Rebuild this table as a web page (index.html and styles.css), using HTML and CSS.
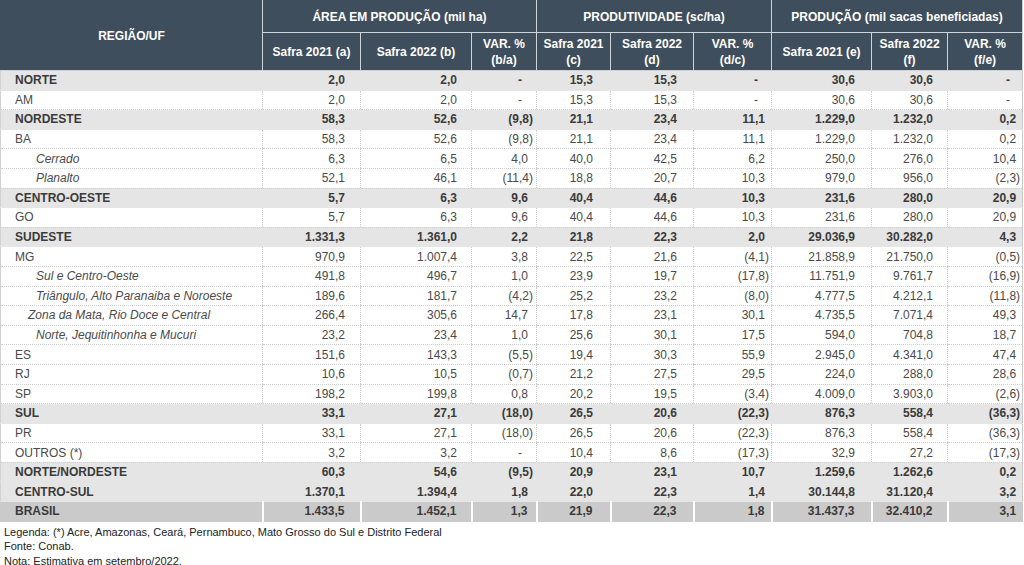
FILE: index.html
```html
<!DOCTYPE html>
<html lang="pt-BR">
<head>
<meta charset="utf-8">
<title>Café - Safra 2022</title>
<link rel="stylesheet" href="styles.css">
</head>
<body>
<table class="tbl">
  <colgroup>
    <col class="c0"><col class="ca"><col class="cb"><col class="cv1">
    <col class="cc"><col class="cd"><col class="cv2">
    <col class="ce"><col class="cf"><col class="cv3">
  </colgroup>
  <thead>
    <tr class="h1">
      <th rowspan="2">REGIÃO/UF</th>
      <th colspan="3">ÁREA EM PRODUÇÃO (mil ha)</th>
      <th colspan="3">PRODUTIVIDADE (sc/ha)</th>
      <th colspan="3">PRODUÇÃO (mil sacas beneficiadas)</th>
    </tr>
    <tr class="h2">
      <th>Safra 2021 (a)</th>
      <th>Safra 2022 (b)</th>
      <th>VAR. %<br>(b/a)</th>
      <th>Safra 2021<br>(c)</th>
      <th>Safra 2022<br>(d)</th>
      <th>VAR. %<br>(d/c)</th>
      <th>Safra 2021 (e)</th>
      <th>Safra 2022<br>(f)</th>
      <th>VAR. %<br>(f/e)</th>
    </tr>
  </thead>
  <tbody>
    <tr class="reg"><td class="nm">NORTE</td><td class="na">2,0</td><td class="nb">2,0</td><td class="v1 d">-</td><td class="nc">15,3</td><td class="nd">15,3</td><td class="v2 d">-</td><td class="ne">30,6</td><td class="nf">30,6</td><td class="v3 d">-</td></tr>
    <tr><td class="nm">AM</td><td class="na">2,0</td><td class="nb">2,0</td><td class="v1 d">-</td><td class="nc">15,3</td><td class="nd">15,3</td><td class="v2 d">-</td><td class="ne">30,6</td><td class="nf">30,6</td><td class="v3 d">-</td></tr>
    <tr class="reg"><td class="nm">NORDESTE</td><td class="na">58,3</td><td class="nb">52,6</td><td class="v1 ng">(9,8)</td><td class="nc">21,1</td><td class="nd">23,4</td><td class="v2">11,1</td><td class="ne">1.229,0</td><td class="nf">1.232,0</td><td class="v3">0,2</td></tr>
    <tr><td class="nm">BA</td><td class="na">58,3</td><td class="nb">52,6</td><td class="v1 ng">(9,8)</td><td class="nc">21,1</td><td class="nd">23,4</td><td class="v2">11,1</td><td class="ne">1.229,0</td><td class="nf">1.232,0</td><td class="v3">0,2</td></tr>
    <tr><td class="nm sub">Cerrado</td><td class="na">6,3</td><td class="nb">6,5</td><td class="v1">4,0</td><td class="nc">40,0</td><td class="nd">42,5</td><td class="v2">6,2</td><td class="ne">250,0</td><td class="nf">276,0</td><td class="v3">10,4</td></tr>
    <tr><td class="nm sub">Planalto</td><td class="na">52,1</td><td class="nb">46,1</td><td class="v1 ng">(11,4)</td><td class="nc">18,8</td><td class="nd">20,7</td><td class="v2">10,3</td><td class="ne">979,0</td><td class="nf">956,0</td><td class="v3 ng">(2,3)</td></tr>
    <tr class="reg"><td class="nm">CENTRO-OESTE</td><td class="na">5,7</td><td class="nb">6,3</td><td class="v1">9,6</td><td class="nc">40,4</td><td class="nd">44,6</td><td class="v2">10,3</td><td class="ne">231,6</td><td class="nf">280,0</td><td class="v3">20,9</td></tr>
    <tr><td class="nm">GO</td><td class="na">5,7</td><td class="nb">6,3</td><td class="v1">9,6</td><td class="nc">40,4</td><td class="nd">44,6</td><td class="v2">10,3</td><td class="ne">231,6</td><td class="nf">280,0</td><td class="v3">20,9</td></tr>
    <tr class="reg"><td class="nm">SUDESTE</td><td class="na">1.331,3</td><td class="nb">1.361,0</td><td class="v1">2,2</td><td class="nc">21,8</td><td class="nd">22,3</td><td class="v2">2,0</td><td class="ne">29.036,9</td><td class="nf">30.282,0</td><td class="v3">4,3</td></tr>
    <tr><td class="nm">MG</td><td class="na">970,9</td><td class="nb">1.007,4</td><td class="v1">3,8</td><td class="nc">22,5</td><td class="nd">21,6</td><td class="v2 ng">(4,1)</td><td class="ne">21.858,9</td><td class="nf">21.750,0</td><td class="v3 ng">(0,5)</td></tr>
    <tr><td class="nm sub">Sul e Centro-Oeste</td><td class="na">491,8</td><td class="nb">496,7</td><td class="v1">1,0</td><td class="nc">23,9</td><td class="nd">19,7</td><td class="v2 ng">(17,8)</td><td class="ne">11.751,9</td><td class="nf">9.761,7</td><td class="v3 ng">(16,9)</td></tr>
    <tr><td class="nm sub">Triângulo, Alto Paranaiba e Noroeste</td><td class="na">189,6</td><td class="nb">181,7</td><td class="v1 ng">(4,2)</td><td class="nc">25,2</td><td class="nd">23,2</td><td class="v2 ng">(8,0)</td><td class="ne">4.777,5</td><td class="nf">4.212,1</td><td class="v3 ng">(11,8)</td></tr>
    <tr><td class="nm sub2">Zona da Mata, Rio Doce e Central</td><td class="na">266,4</td><td class="nb">305,6</td><td class="v1">14,7</td><td class="nc">17,8</td><td class="nd">23,1</td><td class="v2">30,1</td><td class="ne">4.735,5</td><td class="nf">7.071,4</td><td class="v3">49,3</td></tr>
    <tr><td class="nm sub">Norte, Jequitinhonha e Mucuri</td><td class="na">23,2</td><td class="nb">23,4</td><td class="v1">1,0</td><td class="nc">25,6</td><td class="nd">30,1</td><td class="v2">17,5</td><td class="ne">594,0</td><td class="nf">704,8</td><td class="v3">18,7</td></tr>
    <tr><td class="nm">ES</td><td class="na">151,6</td><td class="nb">143,3</td><td class="v1 ng">(5,5)</td><td class="nc">19,4</td><td class="nd">30,3</td><td class="v2">55,9</td><td class="ne">2.945,0</td><td class="nf">4.341,0</td><td class="v3">47,4</td></tr>
    <tr><td class="nm">RJ</td><td class="na">10,6</td><td class="nb">10,5</td><td class="v1 ng">(0,7)</td><td class="nc">21,2</td><td class="nd">27,5</td><td class="v2">29,5</td><td class="ne">224,0</td><td class="nf">288,0</td><td class="v3">28,6</td></tr>
    <tr><td class="nm">SP</td><td class="na">198,2</td><td class="nb">199,8</td><td class="v1">0,8</td><td class="nc">20,2</td><td class="nd">19,5</td><td class="v2 ng">(3,4)</td><td class="ne">4.009,0</td><td class="nf">3.903,0</td><td class="v3 ng">(2,6)</td></tr>
    <tr class="reg"><td class="nm">SUL</td><td class="na">33,1</td><td class="nb">27,1</td><td class="v1 ng">(18,0)</td><td class="nc">26,5</td><td class="nd">20,6</td><td class="v2 ng">(22,3)</td><td class="ne">876,3</td><td class="nf">558,4</td><td class="v3 ng">(36,3)</td></tr>
    <tr><td class="nm">PR</td><td class="na">33,1</td><td class="nb">27,1</td><td class="v1 ng">(18,0)</td><td class="nc">26,5</td><td class="nd">20,6</td><td class="v2 ng">(22,3)</td><td class="ne">876,3</td><td class="nf">558,4</td><td class="v3 ng">(36,3)</td></tr>
    <tr><td class="nm">OUTROS (*)</td><td class="na">3,2</td><td class="nb">3,2</td><td class="v1 d">-</td><td class="nc">10,4</td><td class="nd">8,6</td><td class="v2 ng">(17,3)</td><td class="ne">32,9</td><td class="nf">27,2</td><td class="v3 ng">(17,3)</td></tr>
    <tr class="reg"><td class="nm">NORTE/NORDESTE</td><td class="na">60,3</td><td class="nb">54,6</td><td class="v1 ng">(9,5)</td><td class="nc">20,9</td><td class="nd">23,1</td><td class="v2">10,7</td><td class="ne">1.259,6</td><td class="nf">1.262,6</td><td class="v3">0,2</td></tr>
    <tr class="reg"><td class="nm">CENTRO-SUL</td><td class="na">1.370,1</td><td class="nb">1.394,4</td><td class="v1">1,8</td><td class="nc">22,0</td><td class="nd">22,3</td><td class="v2">1,4</td><td class="ne">30.144,8</td><td class="nf">31.120,4</td><td class="v3">3,2</td></tr>
    <tr class="tot"><td class="nm">BRASIL</td><td class="na">1.433,5</td><td class="nb">1.452,1</td><td class="v1">1,3</td><td class="nc">21,9</td><td class="nd">22,3</td><td class="v2">1,8</td><td class="ne">31.437,3</td><td class="nf">32.410,2</td><td class="v3">3,1</td></tr>
  </tbody>
</table>
<div class="notes">
  <p>Legenda: (*) Acre, Amazonas, Ceará, Pernambuco, Mato Grosso do Sul e Distrito Federal</p>
  <p>Fonte: Conab.</p>
  <p>Nota: Estimativa em setembro/2022.</p>
</div>
</body>
</html>
```
FILE: styles.css
```css
html, body {
  margin: 0;
  padding: 0;
  background: #ffffff;
}
body {
  font-family: "Liberation Sans", Arial, sans-serif;
  color: #4a4a4a;
}
.tbl {
  width: 1022px;
  border-collapse: collapse;
  table-layout: fixed;
  font-size: 12px;
}
.c0 { width: 262px; }
.ca { width: 98px; }
.cb { width: 111px; }
.cv1 { width: 65px; }
.cc { width: 74px; }
.cd { width: 83px; }
.cv2 { width: 78px; }
.ce { width: 100px; }
.cf { width: 76px; }
.cv3 { width: 75px; }

.tbl th {
  background: #3f4e5d;
  color: #ffffff;
  font-weight: bold;
  font-size: 12px;
  line-height: 16px;
  text-align: center;
  vertical-align: middle;
  border: 1px solid #cdd3d9;
  padding: 0 2px;
}
.tbl thead tr:first-child th { border-top-color: #3f4e5d; }
.tbl thead th:first-child { border-left-color: #3f4e5d; }
.h1 { height: 32px; }
.h2 { height: 38px; }

.tbl td {
  height: 18.6px;
  padding: 0;
  white-space: nowrap;
  vertical-align: middle;
  text-align: right;
  border-left: 1px dotted #cfcfcf;
  border-bottom: 1px dotted #cfcfcf;
  line-height: 14px;
}
.tbl td:last-child { border-right: 1px solid #c8c8c8; }
.tbl td.nm {
  text-align: left;
  padding-left: 14px;
  border-left: 1px solid #d2d2d2;
}
.tbl td.sub { padding-left: 35px; font-style: italic; }
.tbl td.sub2 { padding-left: 27px; font-style: italic; }

.na { padding-right: 15px !important; }
.nb { padding-right: 14px !important; }
.nc { padding-right: 17px !important; }
.nd { padding-right: 16px !important; }
.ne { padding-right: 16px !important; }
.nf { padding-right: 14px !important; }

.v1 { padding-right: 8px !important; }
.v2 { padding-right: 6px !important; }
.v3 { padding-right: 6px !important; }
.v1.ng { padding-right: 3px !important; }
.v2.ng { padding-right: 2px !important; }
.v3.ng { padding-right: 2px !important; }
.v1.d { padding-right: 14px !important; }
.v2.d { padding-right: 13px !important; }
.v3.d { padding-right: 12px !important; }

.reg td {
  background: #e5e5e5;
  font-weight: bold;
  color: #3a3a3a;
  border-left: 1px solid #e5e5e5;
  border-bottom: 1px solid #e5e5e5;
}
.reg td.nm { border-left: 1px solid #d2d2d2; }
.reg td:last-child { border-right: 1px solid #c8c8c8; }

.tot td {
  background: #cacaca;
  font-weight: bold;
  color: #3a3a3a;
  border-left: 2px solid #ffffff;
  border-bottom: 1px solid #cacaca;
}
.tot td.nm { border-left: 1px solid #cacaca; }
.tot td:last-child { border-right: 1px solid #cacaca; }

.notes {
  padding: 3px 0 0 4px;
  font-size: 11px;
  color: #222222;
}
.notes p {
  margin: 0;
  line-height: 14.5px;
}
```
